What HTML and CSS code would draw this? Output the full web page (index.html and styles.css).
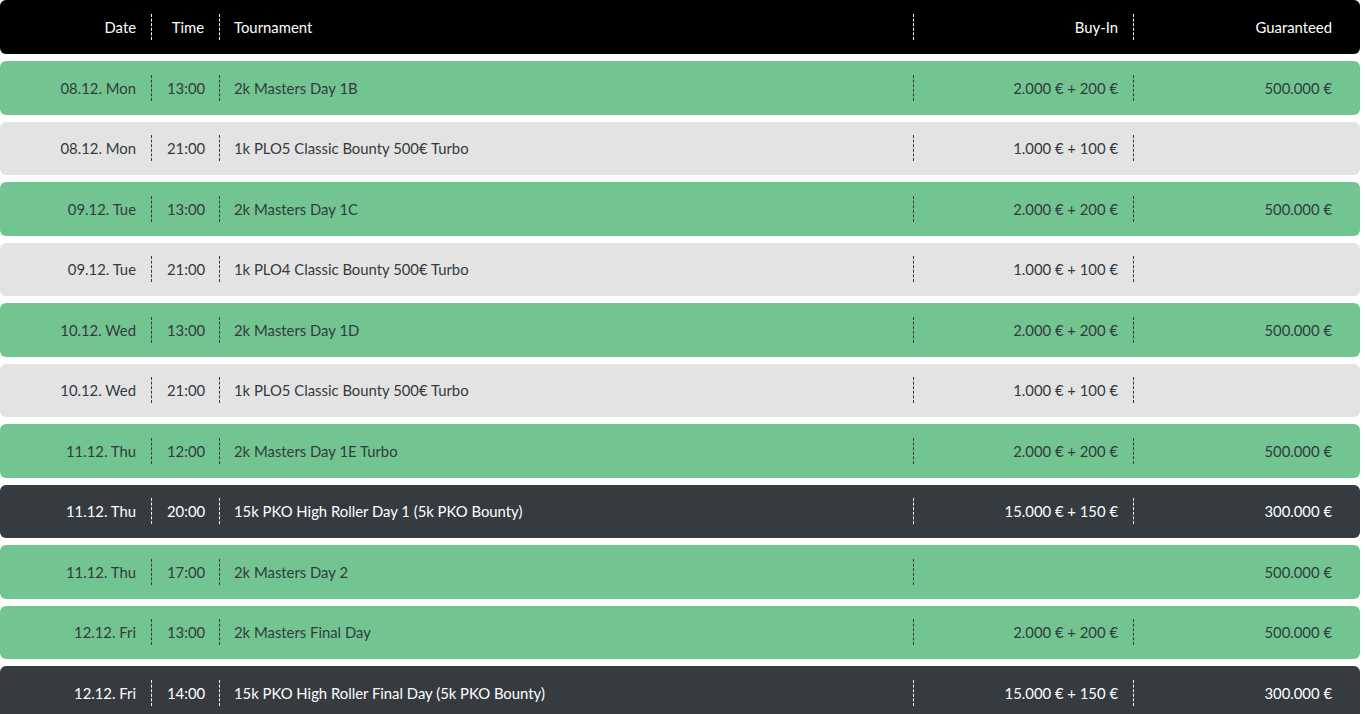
FILE: index.html
```html
<!DOCTYPE html>
<html lang="en">
<head>
<meta charset="utf-8">
<title>Tournament schedule</title>
<link rel="stylesheet" href="styles.css">
</head>
<body>
<div class="schedule">
  <div class="row head">
    <div class="c date">Date</div>
    <div class="c time">Time</div>
    <div class="c name">Tournament</div>
    <div class="c buyin">Buy-In</div>
    <div class="c gtd">Guaranteed</div>
  </div>
  <div class="row green">
    <div class="c date">08.12. Mon</div><div class="c time">13:00</div><div class="c name">2k Masters Day 1B</div><div class="c buyin">2.000 € + 200 €</div><div class="c gtd">500.000 €</div>
  </div>
  <div class="row grey">
    <div class="c date">08.12. Mon</div><div class="c time">21:00</div><div class="c name">1k PLO5 Classic Bounty 500€ Turbo</div><div class="c buyin">1.000 € + 100 €</div><div class="c gtd"></div>
  </div>
  <div class="row green">
    <div class="c date">09.12. Tue</div><div class="c time">13:00</div><div class="c name">2k Masters Day 1C</div><div class="c buyin">2.000 € + 200 €</div><div class="c gtd">500.000 €</div>
  </div>
  <div class="row grey">
    <div class="c date">09.12. Tue</div><div class="c time">21:00</div><div class="c name">1k PLO4 Classic Bounty 500€ Turbo</div><div class="c buyin">1.000 € + 100 €</div><div class="c gtd"></div>
  </div>
  <div class="row green">
    <div class="c date">10.12. Wed</div><div class="c time">13:00</div><div class="c name">2k Masters Day 1D</div><div class="c buyin">2.000 € + 200 €</div><div class="c gtd">500.000 €</div>
  </div>
  <div class="row grey">
    <div class="c date">10.12. Wed</div><div class="c time">21:00</div><div class="c name">1k PLO5 Classic Bounty 500€ Turbo</div><div class="c buyin">1.000 € + 100 €</div><div class="c gtd"></div>
  </div>
  <div class="row green">
    <div class="c date">11.12. Thu</div><div class="c time">12:00</div><div class="c name">2k Masters Day 1E Turbo</div><div class="c buyin">2.000 € + 200 €</div><div class="c gtd">500.000 €</div>
  </div>
  <div class="row dark">
    <div class="c date">11.12. Thu</div><div class="c time">20:00</div><div class="c name">15k PKO High Roller Day 1 (5k PKO Bounty)</div><div class="c buyin">15.000 € + 150 €</div><div class="c gtd">300.000 €</div>
  </div>
  <div class="row green">
    <div class="c date">11.12. Thu</div><div class="c time">17:00</div><div class="c name">2k Masters Day 2</div><div class="c buyin"></div><div class="c gtd">500.000 €</div>
  </div>
  <div class="row green">
    <div class="c date">12.12. Fri</div><div class="c time">13:00</div><div class="c name">2k Masters Final Day</div><div class="c buyin">2.000 € + 200 €</div><div class="c gtd">500.000 €</div>
  </div>
  <div class="row dark">
    <div class="c date">12.12. Fri</div><div class="c time">14:00</div><div class="c name">15k PKO High Roller Final Day (5k PKO Bounty)</div><div class="c buyin">15.000 € + 150 €</div><div class="c gtd">300.000 €</div>
  </div>
</div>
</body>
</html>
```

FILE: styles.css
```css
html, body {
  margin: 0;
  padding: 0;
  background: #ffffff;
}
body {
  font-family: Lato, "Open Sans", sans-serif;
  font-size: 14.85px;
}
.schedule {
  width: 1360px;
  display: flex;
  flex-direction: column;
  gap: 7px;
}
.row {
  display: grid;
  grid-template-columns: 152px 68px 694px 220px 226px;
  align-items: center;
  height: 53.5px;
  border-radius: 6px;
  color: #343a40;
}
.row.head {
  background: #000000;
  color: #ffffff;
  margin-bottom: 0.5px;
}
.row.green { background: #72c590; }
.row.grey { background: #e3e3e3; }
.row.dark { background: #353b3f; color: #ffffff; }

.c {
  height: 26px;
  line-height: 27px;
  padding: 0 15px;
  white-space: nowrap;
  box-sizing: border-box;
}
.date, .time, .name, .buyin {
  border-right: 1px dashed currentColor;
}
.c:empty {
  border-right: none;
}
.date, .time, .buyin, .gtd { text-align: right; }
.name { text-align: left; padding-left: 14px; }
.gtd { padding-right: 28px; }
```
